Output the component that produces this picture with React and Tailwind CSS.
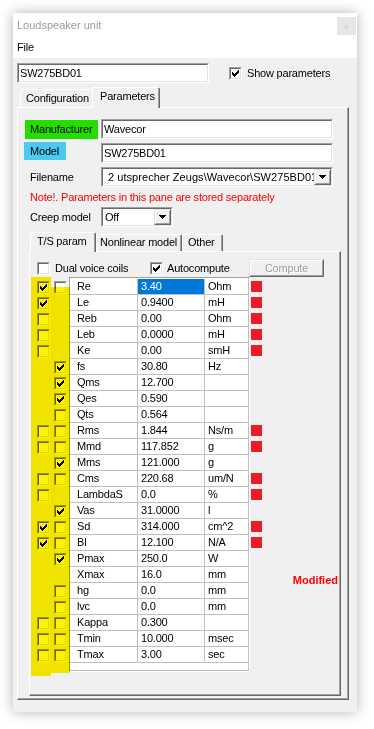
import React from "react";

const ROWS = [
  { n: "Re", v: "3.40", u: "Ohm", a: 1, b: 0, red: true, sel: true },
  { n: "Le", v: "0.9400", u: "mH", a: 1, red: true },
  { n: "Reb", v: "0.00", u: "Ohm", a: 0, red: true },
  { n: "Leb", v: "0.0000", u: "mH", a: 0, red: true },
  { n: "Ke", v: "0.00", u: "smH", a: 0, red: true },
  { n: "fs", v: "30.80", u: "Hz", b: 1 },
  { n: "Qms", v: "12.700", u: "", b: 1 },
  { n: "Qes", v: "0.590", u: "", b: 1 },
  { n: "Qts", v: "0.564", u: "", b: 0 },
  { n: "Rms", v: "1.844", u: "Ns/m", a: 0, b: 0, red: true },
  { n: "Mmd", v: "117.852", u: "g", a: 0, b: 0, red: true },
  { n: "Mms", v: "121.000", u: "g", b: 1 },
  { n: "Cms", v: "220.68", u: "um/N", a: 0, b: 0, red: true },
  { n: "LambdaS", v: "0.0", u: "%", a: 0, red: true },
  { n: "Vas", v: "31.0000", u: "l", b: 1 },
  { n: "Sd", v: "314.000", u: "cm^2", a: 1, b: 0, red: true },
  { n: "Bl", v: "12.100", u: "N/A", a: 1, b: 0, red: true },
  { n: "Pmax", v: "250.0", u: "W", b: 1 },
  { n: "Xmax", v: "16.0", u: "mm" },
  { n: "hg", v: "0.0", u: "mm", b: 0 },
  { n: "lvc", v: "0.0", u: "mm", b: 0 },
  { n: "Kappa", v: "0.300", u: "", a: 0, b: 0 },
  { n: "Tmin", v: "10.000", u: "msec", a: 0, b: 0 },
  { n: "Tmax", v: "3.00", u: "sec", a: 0, b: 0 },
];

function Tick() {
  return (
    <svg width="7" height="7" viewBox="0 0 7 7" shapeRendering="crispEdges" fill="#000">
      <rect x="6" y="0" width="1" height="1" />
      <rect x="5" y="1" width="2" height="1" />
      <rect x="0" y="2" width="1" height="1" />
      <rect x="4" y="2" width="3" height="1" />
      <rect x="0" y="3" width="2" height="1" />
      <rect x="3" y="3" width="3" height="1" />
      <rect x="0" y="4" width="5" height="1" />
      <rect x="1" y="5" width="3" height="1" />
      <rect x="2" y="6" width="1" height="1" />
    </svg>
  );
}

function Arrow() {
  return (
    <svg width="7" height="4" viewBox="0 0 7 4" shapeRendering="crispEdges" fill="#000">
      <rect x="0" y="0" width="7" height="1" />
      <rect x="1" y="1" width="5" height="1" />
      <rect x="2" y="2" width="3" height="1" />
      <rect x="3" y="3" width="1" height="1" />
    </svg>
  );
}

function Sunken({ className = "", children }) {
  return (
    <div className={`border border-t-[#a0a0a0] border-l-[#a0a0a0] border-r-white border-b-white ${className}`}>
      <div className="h-full border border-t-[#696969] border-l-[#696969] border-r-[#e3e3e3] border-b-[#e3e3e3] bg-white flex items-center overflow-hidden">
        {children}
      </div>
    </div>
  );
}

function Raised({ className = "", children }) {
  return (
    <div className={`border border-t-[#e3e3e3] border-l-[#e3e3e3] border-r-[#696969] border-b-[#696969] ${className}`}>
      <div className="h-full border border-t-white border-l-white border-r-[#a0a0a0] border-b-[#a0a0a0] bg-[#f0f0f0] flex items-center justify-center">
        {children}
      </div>
    </div>
  );
}

function Check({ checked }) {
  return (
    <Sunken className="w-[13px] h-[13px] shrink-0">
      <div className="w-full h-full flex items-center justify-center">{checked ? <Tick /> : null}</div>
    </Sunken>
  );
}

function Combo({ className, text, textClass }) {
  return (
    <Sunken className={className}>
      <div className={`flex-1 min-w-0 whitespace-nowrap overflow-hidden ${textClass}`}>{text}</div>
      <Raised className="w-[17px] h-full shrink-0">
        <Arrow />
      </Raised>
    </Sunken>
  );
}

function CheckColumn({ field, pad }) {
  return (
    <div className={`flex flex-col pt-[2px] ${pad}`}>
      {ROWS.map((r) => (
        <div key={r.n} className="h-[16px] pt-[2px]">
          {r[field] === undefined ? null : <Check checked={r[field] === 1} />}
        </div>
      ))}
    </div>
  );
}

export default function App() {
  return (
    <div className="min-h-screen bg-white pl-[13px] pt-[13px] font-['Liberation_Sans',Arial,sans-serif] text-[11px] leading-[13px] text-black tracking-[-0.2px]">
      <div className="w-[344px] h-[699px] bg-[#f0f0f0] shadow-[0_0_12px_rgba(0,0,0,0.3)] flex flex-col">
        {/* Title bar */}
        <div className="h-[24px] bg-white flex items-start">
          <span className="pl-[4px] pt-[6px] text-[#9a9a9a] tracking-normal">Loudspeaker unit</span>
          <div className="ml-auto mr-[1px] mt-[4px] w-[19px] h-[18px] bg-[#e6e6e6] flex items-center justify-center text-[8px] text-[#c8c8c8]">
            x
          </div>
        </div>
        {/* Menu */}
        <div className="h-[21px] bg-white pl-[4px] flex items-center">File</div>

        {/* Body */}
        <div className="flex flex-col pl-[4px]">
          <div className="mt-[5px] h-[20px] flex items-center">
            <Sunken className="w-[192px] h-[20px]">
              <span className="pl-[1px]">SW275BD01</span>
            </Sunken>
            <div className="ml-[20px]">
              <Check checked />
            </div>
            <span className="ml-[5px]">Show parameters</span>
          </div>

          {/* Outer tabs */}
          <div className="mt-[4px] h-[20px] flex items-end pl-[3px] relative z-10">
            <div className="w-[72px] h-[18px] border-l border-t border-l-white border-t-white rounded-tl-[2px] pl-[5px] pt-[2px]">
              Configuration
            </div>
            <div className="w-[68px] h-[21px] -mb-[1px] bg-[#f0f0f0] border-l border-t border-r border-l-white border-t-white border-r-[#696969] shadow-[inset_-1px_0_#a0a0a0] rounded-t-[2px] pl-[7px] pt-[2px]">
              Parameters
            </div>
          </div>

          {/* Outer panel */}
          <div className="w-[332px] h-[593px] border border-t-white border-l-white border-r-[#696969] border-b-[#696969]">
            <div className="h-full border-r border-b border-r-[#a0a0a0] border-b-[#a0a0a0] flex flex-col">
              <div className="mt-[11px] h-[20px] flex">
                <div className="w-[83px]">
                  <div className="ml-[7px] mt-[1px] w-[73px] h-[19px] bg-[#22df00] pl-[5px] flex items-center">Manufacturer</div>
                </div>
                <Sunken className="w-[232px] h-[20px]">
                  <span className="pl-[1px]">Wavecor</span>
                </Sunken>
              </div>

              <div className="mt-[3px] h-[21px] flex">
                <div className="w-[83px]">
                  <div className="ml-[6px] w-[42px] h-[18px] bg-[#4cc9f0] pl-[6px] flex items-center">Model</div>
                </div>
                <Sunken className="mt-[1px] w-[232px] h-[20px]">
                  <span className="pl-[1px]">SW275BD01</span>
                </Sunken>
              </div>

              <div className="mt-[4px] h-[20px] flex items-center">
                <div className="w-[83px] pl-[12px]">Filename</div>
                <Combo
                  className="w-[232px] h-[20px]"
                  text="2 utsprecher Zeugs\Wavecor\SW275BD01"
                  textClass="pl-[5px] tracking-[0.05px]"
                />
              </div>

              <div className="mt-[4px] h-[13px] pl-[12px] text-[#ff0000]">Note!. Parameters in this pane are stored separately</div>

              <div className="mt-[3px] h-[20px] flex items-center">
                <div className="w-[83px] pl-[12px]">Creep model</div>
                <Combo className="w-[72px] h-[20px]" text="Off" textClass="pl-[2px]" />
              </div>

              {/* Inner tabs */}
              <div className="mt-[5px] ml-[11px] h-[19px] flex items-end relative z-10">
                <div className="ml-[1px] w-[66px] h-[20px] -mb-[1px] bg-[#f0f0f0] border-l border-t border-r border-l-white border-t-white border-r-[#696969] shadow-[inset_-1px_0_#a0a0a0] rounded-t-[2px] pl-[6px] pt-[2px]">
                  T/S param
                </div>
                <div className="w-[86px] h-[17px] border-l border-t border-r border-l-white border-t-white border-r-[#696969] shadow-[inset_-1px_0_#a0a0a0] rounded-t-[2px] pl-[3px] pt-[1px]">
                  Nonlinear model
                </div>
                <div className="w-[41px] h-[17px] border-l border-t border-r border-l-white border-t-white border-r-[#696969] shadow-[inset_-1px_0_#a0a0a0] rounded-t-[2px] pl-[5px] pt-[1px]">
                  Other
                </div>
              </div>

              {/* Inner panel */}
              <div className="ml-[11px] w-[312px] h-[445px] border border-t-white border-l-white border-r-[#696969] border-b-[#696969]">
                <div className="h-full border-r border-b border-r-[#a0a0a0] border-b-[#a0a0a0] flex flex-col">
                  <div className="mt-[7px] h-[18px] flex items-center">
                    <div className="ml-[7px] w-[113px] flex items-center gap-[5px]">
                      <Check />
                      <span>Dual voice coils</span>
                    </div>
                    <div className="w-[99px] flex items-center gap-[4px]">
                      <Check checked />
                      <span>Autocompute</span>
                    </div>
                    <Raised className="w-[75px] h-[18px]">
                      <span className="text-[#a0a0a0] [text-shadow:1px_1px_0_#fff]">Compute</span>
                    </Raised>
                  </div>

                  {/* Parameter table */}
                  <div className="ml-[1px] flex relative">
                    <div className="w-[20px]">
                      <CheckColumn field="a" pad="pl-[6px]" />
                    </div>
                    <div className="w-[18px]">
                      <CheckColumn field="b" pad="pl-[3px]" />
                    </div>

                    <div className="w-[181px] h-[395px] border border-t-[#a0a0a0] border-l-[#a0a0a0] border-r-white border-b-white">
                      <div className="h-full bg-white border-r border-b border-r-[#c0c0c0] border-b-[#c0c0c0] pt-[1px]">
                        {ROWS.map((r) => (
                          <div key={r.n} className="h-[16px] flex border-b border-b-[#c0c0c0]">
                            <div className="w-[68px] border-r border-r-[#c0c0c0] pl-[7px] flex items-center">{r.n}</div>
                            <div
                              className={`w-[67px] border-r border-r-[#c0c0c0] pl-[3px] flex items-center ${
                                r.sel ? "bg-[#0078d7] text-white" : ""
                              }`}
                            >
                              {r.v}
                            </div>
                            <div className="w-[43px] pl-[3px] flex items-center">{r.u}</div>
                          </div>
                        ))}
                      </div>
                    </div>

                    <div className="ml-[1px] w-[11px] flex flex-col pt-[2px]">
                      {ROWS.map((r) => (
                        <div key={r.n} className="h-[16px] pt-[2px]">
                          {r.red ? <div className="w-[11px] h-[11px] bg-[#ed1c24]" /> : null}
                        </div>
                      ))}
                    </div>

                    <div className="flex-1 pt-[297px] pr-[1px] text-right font-bold text-[#ff0000] tracking-normal">Modified</div>

                    {/* highlighter marks */}
                    <div className="absolute left-0 top-0 w-[20px] h-[399px] bg-[#fff200] mix-blend-multiply pointer-events-none" />
                    <div className="absolute left-[20px] top-[10px] w-[19px] h-[386px] bg-[#fff200] mix-blend-multiply pointer-events-none" />
                  </div>
                </div>
              </div>
            </div>
          </div>
        </div>
      </div>
    </div>
  );
}
